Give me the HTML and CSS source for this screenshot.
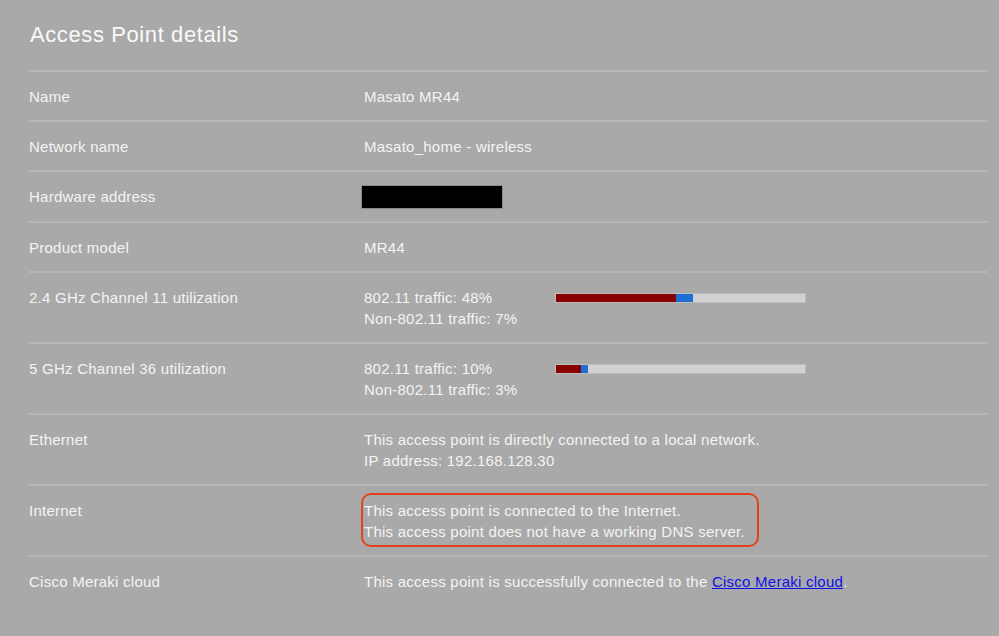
FILE: index.html
```html
<!DOCTYPE html>
<html>
<head>
<meta charset="utf-8">
<link rel="stylesheet" href="styles.css">
</head>
<body>
<div class="panel">
  <h1 class="title">Access Point details</h1>
  <div class="rows">
    <div class="row"><div class="label">Name</div><div class="value">Masato MR44</div></div>
    <div class="row"><div class="label">Network name</div><div class="value">Masato_home - wireless</div></div>
    <div class="row"><div class="label">Hardware address</div><div class="value"><span class="redact"></span></div></div>
    <div class="row"><div class="label">Product model</div><div class="value">MR44</div></div>
    <div class="row"><div class="label">2.4 GHz Channel 11 utilization</div>
      <div class="value util">
        <div class="util-text">802.11 traffic: 48%<br>Non-802.11 traffic: 7%</div>
        <div class="bar"><span class="seg wifi" style="width:48%"></span><span class="seg non" style="width:7%"></span></div>
      </div>
    </div>
    <div class="row"><div class="label">5 GHz Channel 36 utilization</div>
      <div class="value util">
        <div class="util-text">802.11 traffic: 10%<br>Non-802.11 traffic: 3%</div>
        <div class="bar"><span class="seg wifi" style="width:10%"></span><span class="seg non" style="width:3%"></span></div>
      </div>
    </div>
    <div class="row"><div class="label">Ethernet</div><div class="value">This access point is directly connected to a local network.<br>IP address: 192.168.128.30</div></div>
    <div class="row"><div class="label">Internet</div><div class="value"><div class="highlight">This access point is connected to the Internet.<br>This access point does not have a working DNS server.</div></div></div>
    <div class="row"><div class="label">Cisco Meraki cloud</div><div class="value">This access point is successfully connected to the <a href="#">Cisco Meraki cloud</a>.</div></div>
  </div>
</div>
</body>
</html>
```
FILE: styles.css
```css
html, body {
  margin: 0;
  padding: 0;
  background: #a9a9a9;
}
body {
  width: 999px;
  height: 636px;
  overflow: hidden;
  font-family: "Liberation Sans", Arial, sans-serif;
  color: #f4f4f4;
}
.panel {
  padding: 20px 12px 0 29px;
}
.title {
  margin: 0 0 0 1px;
  font-weight: normal;
  font-size: 22px;
  letter-spacing: 0.6px;
  line-height: 30px;
  height: 50px;
  color: #fafafa;
}
.row {
  display: flex;
  border-top: 2px solid #b6b6b6;
  padding: 14px 0 13px;
  font-size: 15px;
  letter-spacing: 0.25px;
  line-height: 21px;
}
.label {
  width: 335px;
  flex: none;
}
.value {
  flex: 1;
}
.util {
  display: flex;
  align-items: flex-start;
}
.util-text {
  width: 192px;
  flex: none;
}
.bar {
  display: flex;
  width: 249px;
  height: 8px;
  margin-top: 7px;
  background: #d2d2d2;
  box-shadow: 0 0 0 1px #bcbcbc;
}
.seg {
  display: block;
  height: 100%;
}
.wifi { background: #880000; }
.non { background: #1d6fd1; }
.redact {
  display: block;
  width: 140px;
  height: 22px;
  margin-left: -2px;
  background: #000;
  box-shadow: 0 0 0 1px #8a8a8a;
}
.highlight {
  display: inline-block;
  border: 2px solid #e4411f;
  border-radius: 10px;
  padding: 5px 12px 3px 1px;
  margin: -7px 0 -6px -3px;
}
a {
  color: #1010e6;
  text-decoration: underline;
}
```
